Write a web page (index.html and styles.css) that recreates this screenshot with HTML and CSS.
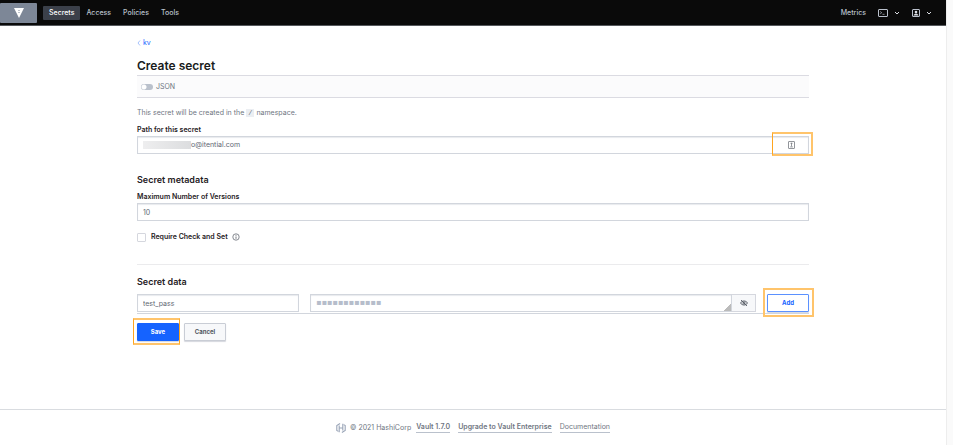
FILE: index.html
```
<!DOCTYPE html>
<html lang="en">
<head>
  <meta charset="UTF-8" />
  <meta name="viewport" content="width=device-width, initial-scale=1.0" />
  <title>Create secret | Vault</title>
  <link rel="stylesheet" href="styles.css">
</head>
<body>
  <div class="app">
    <header class="navbar">
      <a class="logo" href="#" aria-label="Vault">
        <svg width="12" height="12" viewBox="0 0 12 12"><path fill="#fff" d="M1 1h10L6 11z"/><path fill="#7d8797" d="M5 3h2v1H5zM5 5h2v1H5z" opacity=".5"/></svg>
      </a>
      <nav class="links">
        <a class="active" href="#">Secrets</a>
        <a href="#">Access</a>
        <a href="#">Policies</a>
        <a href="#">Tools</a>
      </nav>
      <div class="tools">
        <a href="#">Metrics</a>
        <button type="button" class="tool" aria-label="Console">
          <svg width="10" height="8" viewBox="0 0 10 8" fill="none" stroke="#bac1cc"><rect x=".5" y=".5" width="9" height="7" rx=".5"/><path stroke-width=".7" d="M2.2 2.5l1.5 1.2-1.5 1.2M4.5 5.3h2"/></svg>
          <svg width="6" height="4" viewBox="0 0 6 4" fill="none" stroke="#dce0e6"><path d="M1 1l2 2 2-2"/></svg>
        </button>
        <button type="button" class="tool" aria-label="User menu">
          <svg width="8" height="8" viewBox="0 0 8 8"><rect x=".5" y=".5" width="7" height="7" rx=".5" fill="none" stroke="#bac1cc"/><circle cx="4" cy="3.1" r="1.3" fill="#dce0e6"/><path fill="#dce0e6" d="M1.6 6.6c0-2.4 4.8-2.4 4.8 0z"/></svg>
          <svg width="6" height="4" viewBox="0 0 6 4" fill="none" stroke="#dce0e6"><path d="M1 1l2 2 2-2"/></svg>
        </button>
      </div>
    </header>

    <main class="container">
      <a class="breadcrumb" href="#">
        <svg width="4" height="6" viewBox="0 0 4 6" fill="none" stroke="#8fb3fb" stroke-width=".8"><path d="M3 .5L1 3l2 2.5"/></svg>
        kv
      </a>
      <h1>Create secret</h1>

      <form>
        <div class="toolbar">
          <input type="checkbox" id="json" class="switch" />
          <label for="json">JSON</label>
        </div>
        <p class="hint">This secret will be created in the <code>/</code> namespace.</p>

        <label class="label" for="path">Path for this secret</label>
        <div class="field path-field">
          <span class="redacted"></span>
          <input type="text" id="path" value="o@itential.com" />
          <button type="button" class="path-btn" aria-label="Fill path">
            <svg width="7" height="8" viewBox="0 0 7 8" fill="none" stroke="#777b82"><rect x=".5" y=".5" width="6" height="7" rx=".4" stroke-width=".8"/><path stroke-width=".8" d="M3.5 1.8v3.6M2.5 2.3h2M2.2 5.9h2.6"/></svg>
          </button>
          <span class="mark mark-path"></span>
        </div>

        <h2 class="meta-title">Secret metadata</h2>
        <label class="label" for="versions">Maximum Number of Versions</label>
        <input class="field" type="text" id="versions" value="10" />

        <div class="check">
          <input type="checkbox" id="cas" />
          <label for="cas">Require Check and Set</label>
          <svg width="8" height="8" viewBox="0 0 8 8" fill="none" stroke="#535963"><circle cx="4" cy="4" r="3.2" stroke-width=".7"/><path d="M4 3.5v2.3M4 1.9v.9" stroke-width=".8"/></svg>
        </div>
        <hr />

        <h2 class="data-title">Secret data</h2>
        <div class="row">
          <input class="field key" type="text" aria-label="Key" value="test_pass" />
          <div class="value">
            <textarea class="field" aria-label="Value" rows="1">▪▪▪▪▪▪▪▪▪▪▪▪</textarea>
            <span class="grip"></span>
            <button type="button" class="eye" aria-label="Show value">
              <svg width="8" height="8" viewBox="0 0 8 8" fill="none" stroke="#535963" stroke-width=".9"><path d="M.5 4C2 1.3 6 1.3 7.5 4 6 6.7 2 6.7.5 4z"/><circle cx="4" cy="4" r="1.1"/><path d="M1 1l6 6"/></svg>
            </button>
          </div>
          <div class="marked">
            <button type="button" class="btn add">Add</button>
            <span class="mark mark-add"></span>
          </div>
        </div>

        <div class="actions">
          <div class="marked">
            <button type="submit" class="btn save">Save</button>
            <span class="mark mark-save"></span>
          </div>
          <button type="button" class="btn">Cancel</button>
        </div>
      </form>
    </main>

    <footer>
      <svg width="10" height="10" viewBox="0 0 10 10" fill="none" stroke="#9aa5b8" stroke-width="1.1"><path d="M4.1.5L.8 2.5v5l1.5.9M3.2 2.5v6.8M3.2 5h3.6M6.8.7v6.8M5.9 9.5l3.3-2v-5l-1.5-.9"/></svg>
      <span class="copyright">© 2021 HashiCorp</span>
      <a class="strong" href="#">Vault 1.7.0</a>
      <a class="strong" href="#">Upgrade to Vault Enterprise</a>
      <a href="#">Documentation</a>
    </footer>
  </div>
  <div class="track"></div>
</body>
</html>
```
FILE: styles.css
```
* {
  box-sizing: border-box;
}
body {
  margin: 0;
  min-height: 100vh;
  display: flex;
  font-family: Inter, sans-serif;
  font-size: 7px;
  line-height: 10px;
  color: #6f7682;
  background: white;
}
a {
  color: inherit;
  text-decoration: none;
}
input, textarea, button {
  margin: 0;
  font: inherit;
  color: inherit;
}
svg {
  flex: none;
}
.app {
  flex: 1;
  display: flex;
  flex-direction: column;
}
.track {
  width: 7px;
  background: #fafafa;
  border-left: 1px solid #ededed;
}

/* top bar */
.navbar {
  height: 26px;
  display: flex;
  align-items: center;
  background: #0a0a0a;
  border-bottom: 1px solid #55585c;
  color: #bac1cc;
  font-weight: 500;
}
.logo {
  width: 37px;
  height: 20px;
  display: flex;
  align-items: center;
  justify-content: center;
  background: #7d8797;
  border-radius: 1px;
}
.links {
  display: flex;
  margin-left: 6px;
}
.links a {
  padding: 2px 6px;
  border-radius: 1px;
}
.links .active {
  background: #3b404a;
  color: white;
}
.tools {
  display: flex;
  align-items: center;
  gap: 12px;
  margin-left: auto;
  margin-right: 14px;
}
.tool {
  display: flex;
  align-items: center;
  gap: 6px;
  padding: 0;
  border: 0;
  background: none;
}

/* form */
.container {
  width: 100%;
  max-width: 672px;
  margin: 0 auto;
  padding-top: 12px;
}
.breadcrumb {
  display: flex;
  align-items: center;
  gap: 2px;
  color: #1563ff;
}
h1 {
  margin: 10px 0 1px;
  font-size: 12px;
  line-height: 16px;
  font-weight: 600;
  color: #1a1c20;
}
h2 {
  margin: 0;
  font-size: 9px;
  line-height: 12px;
  font-weight: 600;
  color: #1f2124;
}
.toolbar {
  height: 23px;
  display: flex;
  align-items: center;
  gap: 3px;
  padding-left: 4px;
  background: #fbfbfc;
  border: 1px solid #dbdbe2;
  border-width: 1px 0;
}
.switch {
  appearance: none;
  width: 12px;
  height: 6px;
  border-radius: 3px;
  background: radial-gradient(circle at 3px 3px, white 2px, #bac1cc 3px);
}
.hint {
  margin: 10px 0 7px;
}
code {
  padding: 0 2px;
  font-family: "Liberation Mono", monospace;
  background: #ebeef2;
}
.label {
  display: block;
  margin-bottom: 1px;
  font-weight: 600;
  color: #1f2124;
}
.field {
  display: block;
  width: 100%;
  height: 18px;
  padding: 0 5px;
  background: white;
  border: 1px solid #d2d6dd;
  box-shadow: inset 0 1px 1px #e8eaee;
  outline: 0;
  color: #626873;
}
.path-field {
  position: relative;
  display: flex;
  align-items: center;
}
.path-field input {
  flex: 1;
  padding: 0;
  border: 0;
  outline: 0;
  background: none;
}
.redacted {
  width: 48px;
  height: 8px;
  background: linear-gradient(90deg, #eeeeef, #dcdddf);
}
.path-btn {
  display: flex;
  width: 24px;
  justify-content: center;
  padding: 0;
  border: 0;
  background: none;
}
.meta-title {
  margin: 20px 0 6px;
}
.check {
  display: flex;
  align-items: center;
  margin: 11px 0 22px;
}
.check input {
  appearance: none;
  width: 9px;
  height: 9px;
  margin-right: 5px;
  border: 1px solid #d5d7de;
  border-radius: 1px;
}
.check label {
  margin-right: 4px;
  font-weight: 600;
  color: #1f2124;
}
hr {
  margin: 0;
  border: 0;
  border-top: 1px solid #ebebed;
}
.data-title {
  margin: 11px 0 6px;
}
.row {
  display: flex;
  gap: 11px;
  padding-bottom: 1px;
  border-bottom: 1px solid #d2d6dd;
}
.key {
  flex: 0 0 162px;
}
.value {
  position: relative;
  flex: 1;
  display: flex;
}
.value textarea {
  resize: none;
  overflow: hidden;
  padding: 3px 5px;
  font-family: "DejaVu Sans", sans-serif;
  font-size: 8px;
  color: #b6bdcb;
}
.grip {
  position: absolute;
  right: 25px;
  bottom: 1px;
  width: 7px;
  height: 7px;
  background: linear-gradient(135deg, transparent 50%, #bbb 50%);
}
.eye {
  flex: 0 0 24px;
  display: flex;
  align-items: center;
  justify-content: center;
  padding: 0;
  background: #f7f8fa;
  border: 1px solid #d5d7de;
  border-left: 0;
}
.btn {
  display: block;
  width: 42px;
  height: 18px;
  padding: 0;
  font-size: 6px;
  font-weight: 700;
  color: #525761;
  background: #f7f8fa;
  border: 1px solid #c9cdd5;
  border-radius: 1px;
  box-shadow: 0 1px 1px #d5d7de;
}
.add {
  color: #1563ff;
  background: white;
  border-color: #5b91ff;
}
.save {
  color: white;
  background: #1563ff;
  border-color: #1563ff;
}
.actions {
  display: flex;
  gap: 5px;
  margin-top: 9px;
}

/* orange callouts over the controls */
.marked {
  position: relative;
}
.mark {
  position: absolute;
  border: 2px solid #ffc46b;
  border-left: 1px solid #ffa51f;
  pointer-events: none;
}
.mark-path {
  inset: -5px -5px -3px auto;
  width: 41px;
}
.mark-add {
  inset: -6px -5px -5px -4px;
  border-left: 2px solid #ffc46b;
}
.mark-save {
  inset: -5px -1px -4px -4px;
  border-right: 1px solid #ffa51f;
}

footer {
  display: flex;
  align-items: center;
  justify-content: center;
  gap: 8px;
  height: 36px;
  margin-top: auto;
  border-top: 1px solid #d9dce0;
}
footer svg {
  margin-right: -4px;
}
footer a {
  border-bottom: 1px solid #bac1cc;
}
.copyright {
  margin-right: -3px;
}
.strong {
  font-weight: 600;
}
```
